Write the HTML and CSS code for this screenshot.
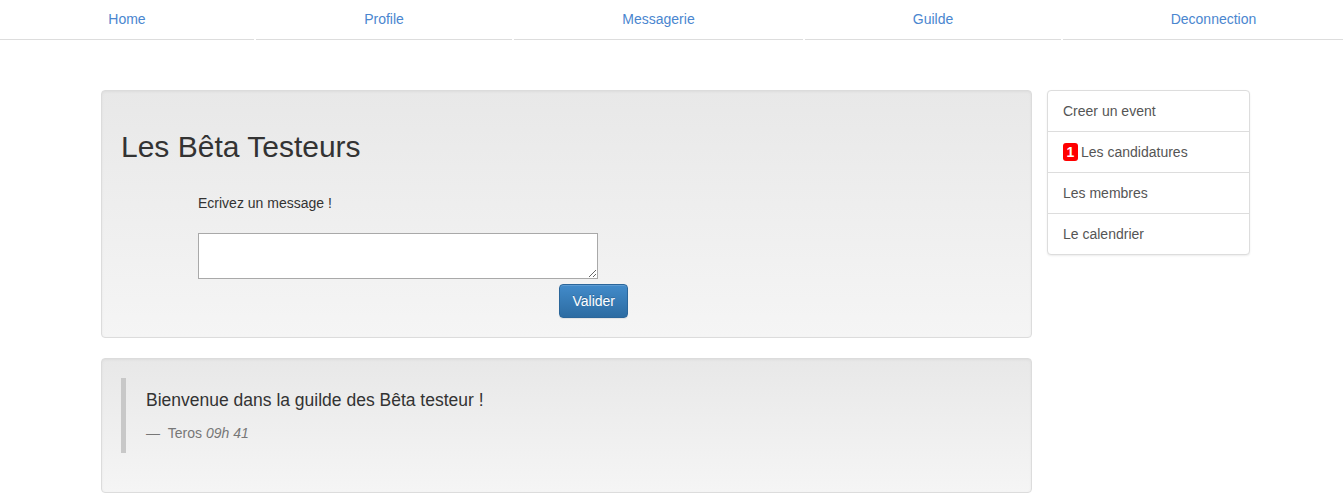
FILE: index.html
```html
<!DOCTYPE html>
<html lang="fr">
<head>
<meta charset="utf-8">
<title>Les Bêta Testeurs</title>
<link rel="stylesheet" href="styles.css">
</head>
<body>
<nav class="topnav">
  <ul class="nav-list">
    <li class="nav-item"><a href="#">Home</a></li>
    <li class="nav-item"><a href="#">Profile</a></li>
    <li class="nav-item"><a href="#">Messagerie</a></li>
    <li class="nav-item"><a href="#">Guilde</a></li>
    <li class="nav-item nav-last"><a href="#">Deconnection</a></li>
  </ul>
</nav>
<div class="container">
  <main class="main-col">
    <section class="well">
      <h2 class="guild-title">Les Bêta Testeurs</h2>
      <form class="msg-form">
        <label class="msg-label" for="msg">Ecrivez un message !</label>
        <textarea id="msg" class="msg-input"></textarea>
        <div class="form-actions">
          <button type="button" class="btn-primary">Valider</button>
        </div>
      </form>
    </section>
    <section class="well">
      <blockquote class="quote">
        <p class="quote-text">Bienvenue dans la guilde des Bêta testeur !</p>
        <footer class="quote-footer">Teros <em>09h 41</em></footer>
      </blockquote>
    </section>
  </main>
  <aside class="side-col">
    <ul class="list-group">
      <li class="list-item"><a href="#">Creer un event</a></li>
      <li class="list-item"><a href="#"><span class="badge-red">1</span>Les candidatures</a></li>
      <li class="list-item"><a href="#">Les membres</a></li>
      <li class="list-item"><a href="#">Le calendrier</a></li>
    </ul>
  </aside>
</div>
</body>
</html>
```

FILE: styles.css
```css
* { box-sizing: border-box; }
html, body {
  margin: 0;
  padding: 0;
  background: #fff;
  font-family: "Liberation Sans", Arial, Helvetica, sans-serif;
  font-size: 14px;
  line-height: 20px;
  color: #333;
}
a { text-decoration: none; }

.topnav { width: 100%; }
.nav-list {
  list-style: none;
  margin: 0;
  padding: 0;
  display: grid;
  grid-template-columns: 254px 256px 289px 256px 1fr;
  column-gap: 2px;
}
.nav-item {
  border-bottom: 1px solid #ddd;
  text-align: center;
}
.nav-item a {
  display: block;
  padding: 9px 15px 10px;
  line-height: 20px;
  color: #4a86cf;
}
.nav-last a { padding-left: 36px; }

.container {
  display: flex;
  align-items: flex-start;
  gap: 15px;
  padding: 50px 0 0 101px;
}
.main-col { width: 931px; }
.side-col { width: 203px; }

.well {
  background: linear-gradient(to bottom, #e8e8e8 0%, #f5f5f5 100%);
  border: 1px solid #dcdcdc;
  border-radius: 4px;
  box-shadow: inset 0 1px 3px rgba(0,0,0,.05), 0 1px 0 rgba(255,255,255,.1);
  padding: 19px;
  margin-bottom: 20px;
}
.guild-title {
  margin: 20px 0 0;
  font-size: 30px;
  font-weight: 500;
  line-height: 33px;
  color: #333;
}
.msg-form {
  width: 430px;
  margin-left: 77px;
  padding-top: 30px;
}
.msg-label {
  display: block;
  line-height: 20px;
  color: #333;
}
.msg-input {
  display: block;
  width: 400px;
  height: 46px;
  margin: 20px 0 0;
  border: 1px solid #a9a9a9;
  background: #fff;
  font-family: inherit;
  font-size: 14px;
  padding: 2px;
  resize: both;
}
.form-actions {
  display: flex;
  justify-content: flex-end;
  margin-top: 5px;
}
.btn-primary {
  font-family: inherit;
  font-size: 14px;
  line-height: 20px;
  padding: 6px 12px;
  height: 34px;
  color: #fff;
  background: linear-gradient(to bottom, #428bca 0%, #2d6ca2 100%);
  border: 1px solid #2b669a;
  border-radius: 4px;
  text-shadow: 0 -1px 0 rgba(0,0,0,.2);
  box-shadow: inset 0 1px 0 rgba(255,255,255,.15), 0 1px 1px rgba(0,0,0,.075);
  cursor: pointer;
}

.quote {
  margin: 0 0 20px;
  padding: 10px 20px;
  border-left: 5px solid #c8c8c8;
}
.quote-text {
  margin: 0 0 10px;
  font-size: 17.5px;
  line-height: 25px;
  color: #333;
}
.quote-footer {
  font-size: 14px;
  line-height: 20px;
  color: #777;
}
.quote-footer::before { content: "\2014\00A0\00A0"; }
.quote-footer em { font-style: italic; }

.list-group {
  list-style: none;
  margin: 0;
  padding: 0;
  background: #fff;
  border: 1px solid #ddd;
  border-radius: 4px;
  box-shadow: 0 1px 2px rgba(0,0,0,.075);
}
.list-item { border-top: 1px solid #ddd; }
.list-item:first-child { border-top: 0; }
.list-item a {
  display: flex;
  align-items: center;
  padding: 10px 15px;
  line-height: 20px;
  color: #555;
}
.badge-red {
  display: inline-block;
  width: 15px;
  height: 18px;
  margin-right: 3px;
  background: #f00;
  color: #fff;
  font-weight: bold;
  font-size: 14px;
  line-height: 18px;
  text-align: center;
  border-radius: 3px;
}
```
